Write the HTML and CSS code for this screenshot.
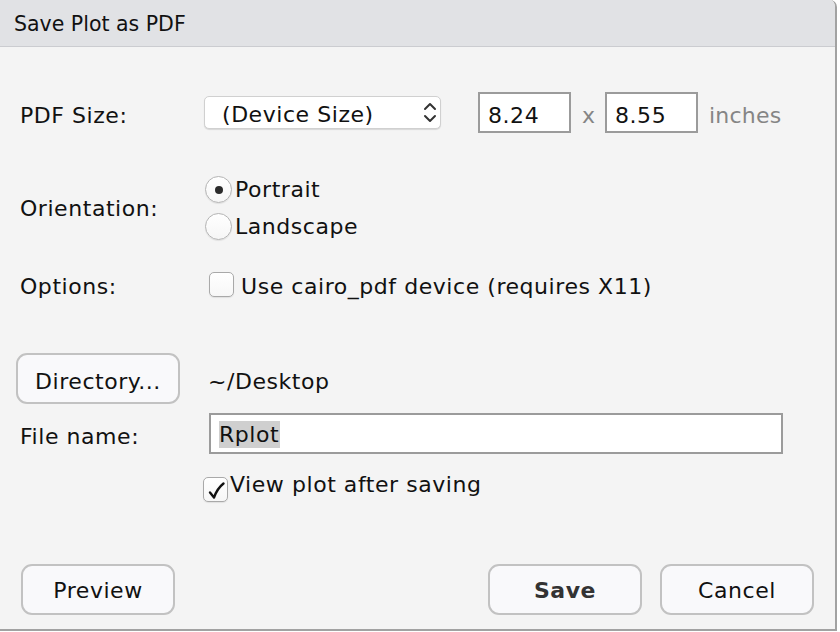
FILE: index.html
```html
<!DOCTYPE html>
<html>
<head>
<meta charset="utf-8">
<link rel="stylesheet" href="styles.css">
</head>
<body>
<div class="dialog">
  <div class="titlebar">Save Plot as PDF</div>
  <div class="content">
    <div class="row row-size">
      <div class="label txt">PDF Size:</div>
      <div class="select">
        <span class="select-text txt">(Device Size)</span>
        <svg class="chevrons" width="14" height="22" viewBox="0 0 14 22">
          <path d="M2 7 L7 2 L12 7" fill="none" stroke="#333" stroke-width="2" stroke-linecap="round" stroke-linejoin="round"/>
          <path d="M2 14 L7 19 L12 14" fill="none" stroke="#333" stroke-width="2" stroke-linecap="round" stroke-linejoin="round"/>
        </svg>
      </div>
      <div class="field field-num first-num txt">8.24</div>
      <span class="muted times txt">x</span>
      <div class="field field-num txt">8.55</div>
      <span class="muted inches txt">inches</span>
    </div>

    <div class="row row-orient">
      <div class="label">Orientation:</div>
      <div class="radios">
        <div class="radio-item"><span class="radio checked"></span><span>Portrait</span></div>
        <div class="radio-item"><span class="radio"></span><span>Landscape</span></div>
      </div>
    </div>

    <div class="row row-options">
      <div class="label txt">Options:</div>
      <span class="checkbox opt-box"></span>
      <span class="opt-text">Use cairo_pdf device (requires X11)</span>
    </div>

    <div class="row row-dir">
      <div class="button dir-button txt">Directory...</div>
      <span class="dir-path txt">~/Desktop</span>
    </div>

    <div class="row row-file">
      <div class="label txt">File name:</div>
      <div class="field field-name"><span class="selected">Rplot</span></div>
    </div>

    <div class="row row-view">
      <span class="checkbox view-box">
        <svg width="22" height="22" viewBox="0 0 22 22">
          <path d="M5 13.5 L9 18.5 C11 13 14 8 18.5 4.5" fill="none" stroke="#111" stroke-width="2.4" stroke-linecap="round" stroke-linejoin="round"/>
        </svg>
      </span>
      <span class="view-text">View plot after saving</span>
    </div>

    <div class="footer">
      <div class="button foot-button btxt">Preview</div>
      <div class="footer-right">
        <div class="button foot-button save btxt">Save</div>
        <div class="button foot-button btxt">Cancel</div>
      </div>
    </div>
  </div>
</div>
</body>
</html>
```

FILE: styles.css
```css
html, body {
  margin: 0;
  padding: 0;
  background: #ffffff;
}

body {
  font-family: "DejaVu Sans", "Liberation Sans", sans-serif;
  font-size: 22px;
  color: #111;
  width: 840px;
  height: 632px;
  overflow: hidden;
}

.dialog {
  width: 837px;
  height: 631px;
  box-sizing: border-box;
  border-right: 2px solid #a2a2a2;
  border-bottom: 2px solid #a2a2a2;
  border-top-right-radius: 7px;
  background: #f4f4f4;
  display: flex;
  flex-direction: column;
  overflow: hidden;
}

.titlebar {
  height: 47px;
  box-sizing: border-box;
  background: #e1e2e5;
  border-bottom: 1px solid #cbccd0;
  padding-left: 14px;
  font-size: 20.5px;
  line-height: 48px;
  color: #111;
}

.content {
  flex: 1;
  display: flex;
  flex-direction: column;
  padding-left: 20px;
  letter-spacing: 0.55px;
}

.txt {
  padding-top: 5px;
}

.btxt {
  padding-top: 2px;
}

.row {
  display: flex;
  align-items: center;
}

.label {
  width: 184px;
  flex: none;
}

.row-size {
  margin-top: 45px;
  height: 41px;
}

.select {
  width: 237px;
  height: 33px;
  box-sizing: border-box;
  background: #ffffff;
  border: 1px solid #d0d0d0;
  border-radius: 5px;
  box-shadow: 0 1px 1px rgba(0, 0, 0, 0.12);
  display: flex;
  align-items: center;
  justify-content: space-between;
  padding-left: 17px;
  padding-right: 3px;
}

.select-text {
  line-height: 1;
}

.field {
  box-sizing: border-box;
  height: 41px;
  background: #ffffff;
  border: 2px solid #9b9b9b;
  display: flex;
  align-items: center;
  padding-left: 8px;
}

.field-num {
  width: 93px;
}

.first-num {
  margin-left: 37px;
}

.muted {
  color: #858585;
}

.times {
  margin: 0 10px 0 11px;
  letter-spacing: 0;
}

.inches {
  margin-left: 11px;
  letter-spacing: 0.2px;
}

.row-orient {
  margin-top: 38px;
  height: 74px;
}

.radios {
  display: flex;
  flex-direction: column;
  margin-left: 1px;
}

.radio-item {
  height: 37px;
  display: flex;
  align-items: center;
  gap: 3px;
}

.radio {
  width: 27px;
  height: 27px;
  box-sizing: border-box;
  border-radius: 50%;
  border: 1px solid #b4b4b4;
  background: linear-gradient(#ffffff, #f6f6f6);
  box-shadow: 0 1px 1px rgba(0, 0, 0, 0.08);
  display: flex;
  align-items: center;
  justify-content: center;
}

.radio.checked::after {
  content: "";
  width: 8px;
  height: 8px;
  border-radius: 50%;
  background: #2b2b2b;
}

.row-options {
  margin-top: 23px;
  height: 32px;
}

.checkbox {
  width: 25px;
  height: 25px;
  box-sizing: border-box;
  border: 1px solid #a9a9a9;
  border-radius: 5px;
  background: linear-gradient(#ffffff, #f7f7f7);
  box-shadow: 0 1px 1px rgba(0, 0, 0, 0.08);
  display: flex;
  align-items: center;
  justify-content: center;
  flex: none;
}

.opt-box {
  margin-left: 5px;
}

.opt-text {
  margin-left: 7px;
  padding-top: 4px;
}

.row-dir {
  margin-top: 53px;
  height: 51px;
}

.button {
  box-sizing: border-box;
  height: 51px;
  border: 2px solid #c2c2c2;
  border-radius: 11px;
  background: #f9f9fb;
  display: flex;
  align-items: center;
  justify-content: center;
}

.dir-button {
  width: 164px;
  margin-left: -4px;
}

.dir-path {
  margin-left: 28px;
}

.row-file {
  margin-top: 9px;
  height: 41px;
}

.field-name {
  width: 574px;
  margin-left: 5px;
  padding-left: 8px;
  padding-top: 2px;
}

.selected {
  background: #cfcfcf;
  line-height: 27px;
  padding-right: 1px;
}

.row-view {
  margin-top: 17px;
  align-items: flex-start;
  padding-left: 183px;
}

.view-box {
  margin-top: 6px;
}

.view-box svg {
  display: block;
}

.view-text {
  margin-left: 2px;
  line-height: 24px;
  padding-top: 2px;
}

.footer {
  margin-top: auto;
  margin-left: -20px;
  padding: 0 21px 14px 21px;
  display: flex;
  justify-content: space-between;
}

.footer-right {
  display: flex;
  gap: 18px;
}

.foot-button {
  width: 154px;
}

.save {
  font-weight: bold;
  color: #333;
}
```
